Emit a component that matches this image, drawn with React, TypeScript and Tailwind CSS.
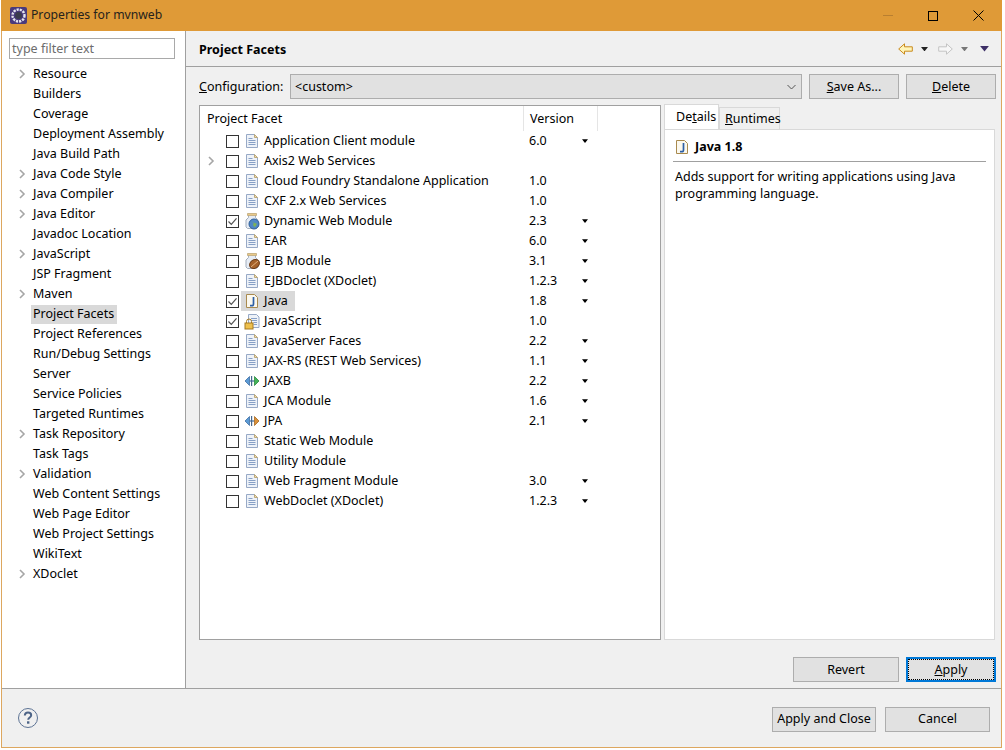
import React from 'react';

const sidebarItems: { label: string; arrow?: boolean; selected?: boolean }[] = [
  { label: 'Resource', arrow: true },
  { label: 'Builders' },
  { label: 'Coverage' },
  { label: 'Deployment Assembly' },
  { label: 'Java Build Path' },
  { label: 'Java Code Style', arrow: true },
  { label: 'Java Compiler', arrow: true },
  { label: 'Java Editor', arrow: true },
  { label: 'Javadoc Location' },
  { label: 'JavaScript', arrow: true },
  { label: 'JSP Fragment' },
  { label: 'Maven', arrow: true },
  { label: 'Project Facets', selected: true },
  { label: 'Project References' },
  { label: 'Run/Debug Settings' },
  { label: 'Server' },
  { label: 'Service Policies' },
  { label: 'Targeted Runtimes' },
  { label: 'Task Repository', arrow: true },
  { label: 'Task Tags' },
  { label: 'Validation', arrow: true },
  { label: 'Web Content Settings' },
  { label: 'Web Page Editor' },
  { label: 'Web Project Settings' },
  { label: 'WikiText' },
  { label: 'XDoclet', arrow: true },
];

type FacetIcon = 'doc' | 'web' | 'ejb' | 'java' | 'js' | 'jaxb' | 'jpa';

interface Facet {
  name: string;
  version: string;
  icon: FacetIcon;
  menu?: boolean;
  checked?: boolean;
  arrow?: boolean;
  selected?: boolean;
}

const facets: Facet[] = [
  { name: 'Application Client module', version: '6.0', icon: 'doc', menu: true },
  { name: 'Axis2 Web Services', version: '', icon: 'doc', arrow: true },
  { name: 'Cloud Foundry Standalone Application', version: '1.0', icon: 'doc' },
  { name: 'CXF 2.x Web Services', version: '1.0', icon: 'doc' },
  { name: 'Dynamic Web Module', version: '2.3', icon: 'web', menu: true, checked: true },
  { name: 'EAR', version: '6.0', icon: 'doc', menu: true },
  { name: 'EJB Module', version: '3.1', icon: 'ejb', menu: true },
  { name: 'EJBDoclet (XDoclet)', version: '1.2.3', icon: 'doc', menu: true },
  { name: 'Java', version: '1.8', icon: 'java', menu: true, checked: true, selected: true },
  { name: 'JavaScript', version: '1.0', icon: 'js', checked: true },
  { name: 'JavaServer Faces', version: '2.2', icon: 'doc', menu: true },
  { name: 'JAX-RS (REST Web Services)', version: '1.1', icon: 'doc', menu: true },
  { name: 'JAXB', version: '2.2', icon: 'jaxb', menu: true },
  { name: 'JCA Module', version: '1.6', icon: 'doc', menu: true },
  { name: 'JPA', version: '2.1', icon: 'jpa', menu: true },
  { name: 'Static Web Module', version: '', icon: 'doc' },
  { name: 'Utility Module', version: '', icon: 'doc' },
  { name: 'Web Fragment Module', version: '3.0', icon: 'doc', menu: true },
  { name: 'WebDoclet (XDoclet)', version: '1.2.3', icon: 'doc', menu: true },
];

function Chevron() {
  return (
    <svg width="7" height="10" viewBox="0 0 7 10" fill="none" stroke="#a6a6a6" strokeWidth="1.6">
      <path d="M1 1l4 4-4 4" />
    </svg>
  );
}

function DocIcon() {
  return (
    <svg width="16" height="16" viewBox="0 0 16 16" fill="none">
      <path d="M2.500 1.500h8l3 3v10h-11z" fill="#eef2f8" stroke="#97a9c6" />
      <path d="M10.500 1.500v3h3z" fill="#f3dfae" stroke="#bba97e" />
      <path d="M4.500 5.500h4M4.500 7.500h7M4.500 9.500h7M4.500 11.500h7" stroke="#87a0c6" />
    </svg>
  );
}

function JavaIcon() {
  return (
    <svg width="16" height="16" viewBox="0 0 16 16" fill="none">
      <path d="M2.500 1.500h8l3 3v10h-11z" fill="#fbf8ee" stroke="#a98a4e" />
      <path d="M9.500 4v7q0 1.700-1.700 1.700H6" stroke="#2d5fa5" strokeWidth="1.700" />
    </svg>
  );
}

function WebIcon() {
  return (
    <svg width="17" height="17" viewBox="0 0 17 17" fill="none">
      <path d="M4.500 2.500V4.500L2 7v7l1.500 1.500h9L14 14V7l-2.500-2.500V2.500" fill="#e6ecf4" stroke="#a3aebd" />
      <path d="M3.500 .5h9v2h-9z" fill="#e9c98a" stroke="#b7a06f" strokeWidth="0.700" />
      <circle cx="10" cy="11" r="5" fill="#4f86c6" stroke="#2f5f99" />
      <path d="M7 8.500l3 .8-1 3 2 2 2-3.500" fill="#7db257" />
    </svg>
  );
}

function EjbIcon() {
  return (
    <svg width="17" height="17" viewBox="0 0 17 17" fill="none">
      <path d="M4.500 2.500V4.500L2 7v7l1.500 1.500h9L14 14V7l-2.500-2.500V2.500" fill="#e6ecf4" stroke="#a3aebd" />
      <path d="M3.500 .5h9v2h-9z" fill="#e9c98a" stroke="#b7a06f" strokeWidth="0.700" />
      <ellipse cx="10.500" cy="11" rx="5.200" ry="4.200" transform="rotate(-35 10.500 11)" fill="#a5622b" stroke="#6e3d17" />
      <path d="M7 14l7-6" stroke="#e2b27f" />
    </svg>
  );
}

function JsIcon() {
  return (
    <svg width="17" height="17" viewBox="0 0 17 17" fill="none">
      <path d="M4.500 1.500h8l2.500 2.500v10.500H4.500z" fill="#eef2f8" stroke="#97a9c6" />
      <path d="M7 5.500h6M7 7.500h6M9.500 9.500h3.500M9.500 11.500h3.500" stroke="#87a0c6" />
      <path d="M2.500 10V8.500a2.500 2.500 0 0 1 5 0V10" stroke="#a67a22" />
      <rect x="1" y="10" width="8" height="6" fill="#eec04d" stroke="#a67a22" />
    </svg>
  );
}

function BindIcon({ color, edge }: { color: string; edge: string }) {
  return (
    <svg width="16" height="16" viewBox="0 0 16 16">
      <path d="M5.500 3.500v9L1 8z" fill="#5b9bd5" stroke="#3f6fa5" strokeWidth="0.800" />
      <rect x="5.500" y="7.300" width="5" height="1.400" fill="#5b7fa8" />
      <rect x="7" y="3" width="1.200" height="10" fill="#46688f" />
      <path d="M10.500 3.500v9L15 8z" fill={color} stroke={edge} strokeWidth="0.800" />
    </svg>
  );
}

function FacetGlyph({ icon }: { icon: FacetIcon }) {
  if (icon === 'web') return <WebIcon />;
  if (icon === 'ejb') return <EjbIcon />;
  if (icon === 'java') return <JavaIcon />;
  if (icon === 'js') return <JsIcon />;
  if (icon === 'jaxb') return <BindIcon color="#45b35a" edge="#2b8a3e" />;
  if (icon === 'jpa') return <BindIcon color="#d9913a" edge="#a8681f" />;
  return <DocIcon />;
}

function Checkbox({ checked }: { checked?: boolean }) {
  return (
    <span className="w-[13px] h-[13px] shrink-0 border border-[#333333] bg-white flex items-center justify-center">
      {checked && (
        <svg width="11" height="11" viewBox="0 0 11 11" fill="none" stroke="#555555" strokeWidth="1.200">
          <path d="M1.500 5.500l2.800 2.800 5.200-6" />
        </svg>
      )}
    </span>
  );
}

function Triangle({ color = '#000000', w = 6 }: { color?: string; w?: number }) {
  return (
    <svg width={w} height={w / 2 + 1} viewBox="0 0 8 5">
      <path d="M0 0h8L4 5z" fill={color} />
    </svg>
  );
}

function Button({ children, w, primary }: { children: React.ReactNode; w: string; primary?: boolean }) {
  return (
    <button
      className={`${w} h-[25px] shrink-0 bg-[#e1e1e1] text-[12.5px] pt-px flex items-center justify-center ${
        primary ? 'border-2 border-[#0078d7] outline outline-1 outline-dotted outline-black -outline-offset-3' : 'border border-[#adadad]'
      }`}
    >
      {children}
    </button>
  );
}

export default function App() {
  return (
    <div className="w-[1005px] h-[750px] bg-white pl-px font-['Noto_Sans','Liberation_Sans',sans-serif] text-[12.5px] text-black overflow-hidden">
      <div className="w-[1001px] h-[748px] flex flex-col border-x border-b border-[#dda75f] bg-[#f0f0f0]">
        {/* title bar */}
        <div className="h-[31px] shrink-0 bg-[#df9a37] flex items-center -mx-px pl-[9px]">
          <svg width="17" height="17" viewBox="0 0 17 17">
            <rect x="0" y="0" width="17" height="17" rx="2" fill="#4a3a7c" />
            <circle cx="8.500" cy="8.500" r="6" fill="none" stroke="#e6e6ee" strokeWidth="2.400" strokeDasharray="2.200 1" />
            <circle cx="8.500" cy="8.500" r="3.400" fill="#3a3a4c" />
          </svg>
          <span className="ml-[4px] text-[12.2px] text-[#26221c]">Properties for mvnweb</span>
          <div className="ml-auto flex items-center">
            <span className="w-[10px] h-px bg-[#b97f30]" />
            <span className="ml-[35px] w-[10px] h-[10px] border border-black" />
            <svg className="ml-[35px] mr-[18px]" width="11" height="11" viewBox="0 0 11 11" stroke="#000000" strokeWidth="1">
              <path d="M.5.5l10 10M10.500.5l-10 10" />
            </svg>
          </div>
        </div>

        <div className="flex-1 flex min-h-0">
          {/* preference tree */}
          <aside className="w-[184px] shrink-0 bg-white border-r border-[#a0a0a0] pl-[7px] pt-[7px]">
            <div className="w-[166px] h-[21px] border border-[#a9a9a9] pl-[2px] pt-[2px] flex items-center text-[#6d6d6d]">type filter text</div>
            <div className="mt-[5px]">
              {sidebarItems.map((item) => (
                <div key={item.label} className="h-5 flex items-center">
                  <span className="w-[24px] pl-[10px] shrink-0 flex">{item.arrow && <Chevron />}</span>
                  <span className={`h-[19px] px-[2px] -ml-[2px] pr-[3px] flex items-center ${item.selected ? 'bg-[#d9d9d9]' : ''}`}>{item.label}</span>
                </div>
              ))}
            </div>
          </aside>

          {/* page */}
          <main className="flex-1 flex flex-col min-w-0">
            <div className="h-[36px] shrink-0 border-b border-[#a0a0a0] flex items-center pl-[13px] pr-[12px] pt-[2px]">
              <span className="font-bold mt-[2px]">Project Facets</span>
              <div className="ml-auto flex items-center -mt-px">
                <svg width="15" height="12" viewBox="0 0 15 12">
                  <path d="M.7 6L6.500.8v3h7.800v4.400H6.500v3z" fill="#fff5b8" stroke="#c98a1e" />
                </svg>
                <span className="ml-[8px] flex"><Triangle color="#222222" w={7} /></span>
                <svg className="ml-[10px]" width="15" height="12" viewBox="0 0 15 12">
                  <path d="M14.300 6L8.500.8v3H.7v4.400h7.800v3z" fill="#f7f7f7" stroke="#c4c4c4" />
                </svg>
                <span className="ml-[8px] flex"><Triangle color="#777777" w={7} /></span>
                <span className="ml-[12px] flex"><Triangle color="#3d2f66" w={9} /></span>
              </div>
            </div>

            <div className="flex-1 flex flex-col pl-[13px] pr-[5px] min-h-0">
              <div className="h-[25px] mt-[7px] shrink-0 flex items-center">
                <span className="w-[91px] shrink-0 pt-[2px]"><u>C</u>onfiguration:</span>
                <div className="w-[512px] h-[25px] shrink-0 bg-[#e1e1e1] border border-[#adadad] flex items-center pl-[4px] pr-[5px]">
                  <span className="pt-[2px]">&lt;custom&gt;</span>
                  <svg className="ml-auto" width="9" height="6" viewBox="0 0 9 6" fill="none" stroke="#555555">
                    <path d="M.5 1l4 4 4-4" />
                  </svg>
                </div>
                <div className="ml-[7px]"><Button w="w-[90px]"><span className="pt-px"><u>S</u>ave As...</span></Button></div>
                <div className="ml-[7px]"><Button w="w-[90px]"><span className="pt-px"><u>D</u>elete</span></Button></div>
              </div>

              <div className="flex mt-[6px] h-[535px] shrink-0">
                {/* facets table */}
                <section className="w-[462px] shrink-0 bg-white border border-[#a0a0a0]">
                  <div className="h-[25px] flex items-stretch">
                    <span className="w-[324px] pl-[7px] pt-[2px] flex items-center border-r border-[#e5e5e5]">Project Facet</span>
                    <span className="w-[74px] pl-[6px] pt-[2px] flex items-center border-r border-[#e5e5e5]">Version</span>
                  </div>
                  <div>
                    {facets.map((f) => (
                      <div key={f.name} className="h-5 flex items-center">
                        <span className="w-[26px] pl-[8px] shrink-0 flex">{f.arrow && <Chevron />}</span>
                        <Checkbox checked={f.checked} />
                        <span className={`ml-[2px] h-[20px] pl-[3px] pr-[7px] flex items-center ${f.selected ? 'bg-[#d9d9d9]' : ''}`}>
                          <span className="w-[20px] shrink-0 flex"><FacetGlyph icon={f.icon} /></span>
                          <span className="whitespace-nowrap">{f.name}</span>
                        </span>
                        <span className="ml-auto w-[131px] shrink-0 flex items-center">
                          <span className="w-[53px]">{f.version}</span>
                          {f.menu && <Triangle w={6} />}
                        </span>
                      </div>
                    ))}
                  </div>
                </section>

                {/* details tabs */}
                <section className="ml-[3px] w-[331px] shrink-0 flex flex-col">
                  <div className="h-[24px] flex items-end shrink-0 relative z-10">
                    <span className="w-[55px] h-[25px] bg-white border border-b-0 border-[#d9d9d9] pl-[11px] flex items-center">De<u>t</u>ails</span>
                    <span className="w-[61px] h-[22px] bg-[#f0f0f0] border border-b-0 border-[#d9d9d9] pl-[5px] pt-[2px] flex items-center"><u>R</u>untimes</span>
                  </div>
                  <div className="flex-1 bg-white border border-[#d9d9d9] px-[8px]">
                    <div className="h-[32px] flex items-center pl-[1px] pt-[3px] border-b border-[#a0a0a0]">
                      <JavaIcon />
                      <span className="ml-[4px] pl-[1px] pt-[1px] font-bold">Java 1.8</span>
                    </div>
                    <p className="mt-[6px] leading-[17px] pl-[2px] w-[300px]">Adds support for writing applications using Java programming language.</p>
                  </div>
                </section>
              </div>

              <div className="mt-[17px] flex justify-end gap-[7px] pr-0 shrink-0">
                <Button w="w-[106px]">Revert</Button>
                <Button w="w-[90px]" primary><span><u>A</u>pply</span></Button>
              </div>
            </div>
          </main>
        </div>

        {/* dialog footer */}
        <footer className="h-[59px] shrink-0 border-t border-[#a0a0a0] flex items-center pl-[15px] pr-[11px]">
          <svg width="22" height="22" viewBox="0 0 22 22" fill="none">
            <circle cx="11" cy="11" r="9.500" stroke="#5d7394" strokeWidth="1" />
            <path d="M7.800 8.500Q8 5.600 11 5.600q3.200 0 3.200 2.600c0 2.300-3 2.300-3 4.600" stroke="#4d6487" strokeWidth="2" />
            <rect x="10" y="14.300" width="2.400" height="2.400" fill="#4d6487" />
          </svg>
          <div className="ml-auto flex gap-[9px] mt-[2px]">
            <Button w="w-[104px]">Apply and Close</Button>
            <Button w="w-[105px]">Cancel</Button>
          </div>
        </footer>
      </div>
    </div>
  );
}
